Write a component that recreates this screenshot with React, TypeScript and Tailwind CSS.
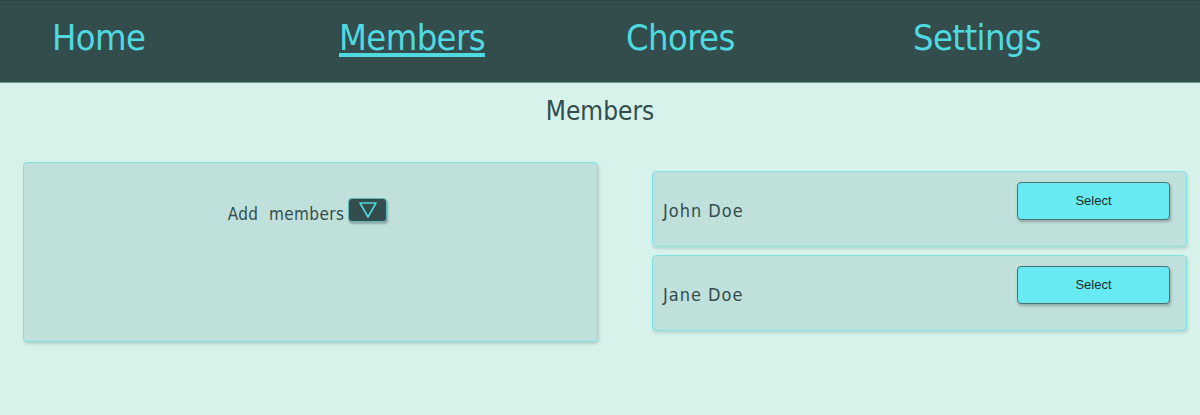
const font = "font-['DejaVu_Sans_Condensed',sans-serif]"

const members = ["John Doe", "Jane Doe"]

function Nav() {
  const items = ["Home", "Members", "Chores", "Settings"]
  return (
    <nav className="h-[83px] bg-[#334d4d] border-t border-[#2a4646] border-b border-b-[#6f9a95] flex items-center pl-[52px] pb-[6px]">
      {items.map((item) => (
        <div key={item} className="w-[287px] shrink-0">
          <a
            href="#"
            className={
              "text-[36px] leading-none text-[#4fd9e0] font-light tracking-[-0.6px] " +
              (item === "Members" ? "underline decoration-[4px] underline-offset-[3px]" : "")
            }
          >
            {item}
          </a>
        </div>
      ))}
    </nav>
  )
}

export default function App() {
  return (
    <div className={"w-[1200px] h-[415px] bg-[#d7f2ea] text-[#334d4d] " + font}>
      <Nav />
      <h1 className="text-center text-[26px] leading-none mt-[15px]">Members</h1>
      <div className="flex mt-[38px] pl-[23px]">
        <div className="w-[575px] h-[180px] bg-[#c0e0db] border border-[#7fe3e6] rounded-[4px] shadow-[1px_2px_3px_rgba(0,0,0,0.15)] flex justify-center pt-[35px]">
          <div className="flex items-start gap-[4px] ml-[-6px]">
            <span className="text-[17px] leading-none mt-[8px] tracking-[0.4px]">Add&nbsp; members</span>
            <button className="w-[39px] h-[24px] bg-[#334d4d] rounded-[4px] border border-[#5fb8bb] shadow-[1px_2px_2px_rgba(0,0,0,0.25)] flex items-center justify-center">
              <svg width="20" height="18" viewBox="0 0 20 18">
                <path d="M2 2 L18 2 L10 16 Z" fill="none" stroke="#4fd9e0" strokeWidth="1.6" strokeLinejoin="round" />
              </svg>
            </button>
          </div>
        </div>
        <div className="ml-[54px] mt-[9px] flex flex-col gap-[8px]">
          {members.map((m) => (
            <div
              key={m}
              className="w-[535px] h-[76px] bg-[#c0e0db] border border-[#7fe3e6] rounded-[4px] shadow-[1px_2px_3px_rgba(0,0,0,0.12)] flex items-start justify-between pl-[10px] pr-[16px] pt-[10px]"
            >
              <span className="text-[18px] leading-none mt-[20px] tracking-[1px]">{m}</span>
              <button className="w-[153px] h-[38px] bg-[#67eaf2] border border-[#4c6f70] rounded-[4px] shadow-[1px_2px_3px_rgba(0,0,0,0.25)] text-[13px] text-[#1d2e2e] font-['Liberation_Sans',sans-serif] pb-[1px]">
                Select
              </button>
            </div>
          ))}
        </div>
      </div>
    </div>
  )
}
